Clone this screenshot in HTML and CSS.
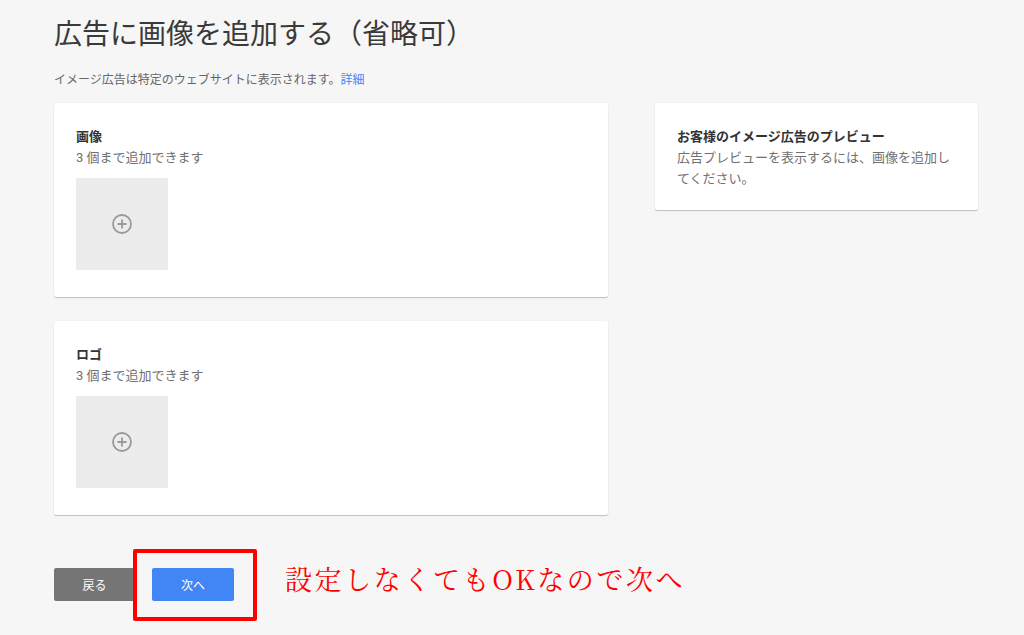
FILE: index.html
```html
<!DOCTYPE html>
<html lang="ja">
<head>
    <meta charset="UTF-8">
    <meta name="viewport" content="width=device-width, initial-scale=1.0">
    <title>広告に画像を追加する</title>
    <link rel="stylesheet" href="styles.css">
</head>
<body>
    <main class="page">
        <h1 class="page-title">広告に画像を追加する（省略可）</h1>
        <p class="page-note">イメージ広告は特定のウェブサイトに表示されます。<a href="#">詳細</a></p>

        <div class="columns">
            <div class="left-col">
                <section class="card">
                    <h2 class="card-title">画像</h2>
                    <p class="card-text">3 個まで追加できます</p>
                    <button type="button" class="add-box" aria-label="画像を追加">
                        <svg width="22" height="22" viewBox="0 0 22 22">
                            <circle cx="11" cy="11" r="9" fill="none" stroke="#9a9a9a" stroke-width="1.8"/>
                            <path d="M11 6.5v9M6.5 11h9" stroke="#9a9a9a" stroke-width="1.8"/>
                        </svg>
                    </button>
                </section>

                <section class="card">
                    <h2 class="card-title">ロゴ</h2>
                    <p class="card-text">3 個まで追加できます</p>
                    <button type="button" class="add-box" aria-label="ロゴを追加">
                        <svg width="22" height="22" viewBox="0 0 22 22">
                            <circle cx="11" cy="11" r="9" fill="none" stroke="#9a9a9a" stroke-width="1.8"/>
                            <path d="M11 6.5v9M6.5 11h9" stroke="#9a9a9a" stroke-width="1.8"/>
                        </svg>
                    </button>
                </section>
            </div>

            <aside class="card preview-card">
                <h2 class="card-title">お客様のイメージ広告のプレビュー</h2>
                <p class="card-text">広告プレビューを表示するには、画像を追加してください。</p>
            </aside>
        </div>

        <div class="actions">
            <button type="button" class="btn btn-back">戻る</button>
            <span class="highlight">
                <button type="button" class="btn btn-next">次へ</button>
            </span>
            <span class="annotation">設定しなくてもOKなので次へ</span>
        </div>
    </main>
</body>
</html>
```

FILE: styles.css
```css
body {
    margin: 0;
    padding: 0;
    background-color: #f6f6f6;
    font-family: Roboto, "Noto Sans CJK JP", sans-serif;
    color: #333;
}
.page {
    padding: 17px 0 40px 54px;
}
.page-title {
    margin: 0;
    font-size: 28px;
    font-weight: normal;
    line-height: 36px;
    color: #3a3a3a;
}
.page-note {
    margin: 18px 0 0;
    font-size: 12px;
    line-height: 18px;
    color: #666;
}
.page-note a {
    color: #4285f4;
    text-decoration: none;
}
.columns {
    display: flex;
    align-items: flex-start;
    gap: 47px;
    margin-top: 14px;
}
.left-col {
    display: flex;
    flex-direction: column;
    gap: 24px;
    width: 554px;
}
.card {
    background: white;
    border-radius: 2px;
    padding: 24px 22px 27px;
    box-shadow: 0 1px 1px rgba(0, 0, 0, 0.22), 0 0 2px rgba(0, 0, 0, 0.06);
}
.card-title {
    margin: 0;
    font-size: 13px;
    font-weight: bold;
    line-height: 20px;
    color: #333;
}
.card-text {
    margin: 0;
    font-size: 13px;
    line-height: 21px;
    color: #707070;
}
.add-box {
    display: flex;
    align-items: center;
    justify-content: center;
    width: 92px;
    height: 92px;
    margin-top: 10px;
    padding: 0;
    border: none;
    background: #ececec;
    cursor: pointer;
}
.preview-card {
    width: 279px;
    padding-bottom: 21px;
}
.actions {
    display: flex;
    align-items: center;
    margin-top: 53px;
}
.btn {
    width: 81px;
    height: 33px;
    border: none;
    border-radius: 2px;
    font-family: Roboto, "Noto Sans CJK JP", sans-serif;
    font-size: 12px;
    color: white;
    cursor: pointer;
}
.btn-back {
    background-color: #757575;
}
.btn-next {
    width: 82px;
    background-color: #4285f4;
    display: block;
}
.highlight {
    position: relative;
    margin-left: 17px;
}
.highlight::after {
    content: "";
    position: absolute;
    top: -19px;
    bottom: -20px;
    left: -19px;
    right: -23px;
    border: 4px solid #ff0000;
    border-radius: 2px;
}
.annotation {
    margin-left: 51px;
    margin-top: -13px;
    font-family: "Noto Serif CJK JP", "Liberation Serif", "Noto Sans CJK JP", serif;
    font-size: 27px;
    color: #ff0000;
    letter-spacing: 2.6px;
}
```
